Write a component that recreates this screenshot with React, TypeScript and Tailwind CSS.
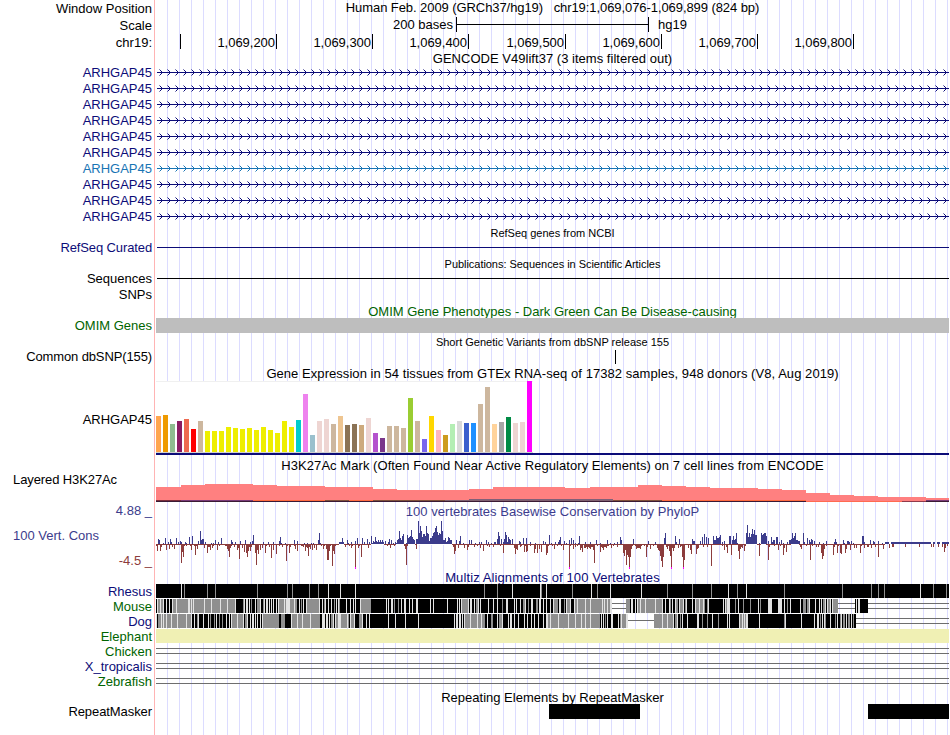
import React from "react";
import clsx from "clsx";

const NAVY = "#0c0c78";

const GTEX: [string, number][] = [
  ["#ffa54f", 36], ["#ee9a00", 37], ["#8fbc8f", 28], ["#8b1c62", 31], ["#ee6a50", 33], ["#ff0000", 23],
  ["#cdb79e", 31], ["#eeee00", 21], ["#eeee00", 21], ["#eeee00", 21], ["#eeee00", 25], ["#eeee00", 24],
  ["#eeee00", 23], ["#eeee00", 24], ["#eeee00", 22], ["#eeee00", 25], ["#eeee00", 22], ["#eeee00", 19],
  ["#eeee00", 31], ["#eeee00", 25], ["#00cdcd", 32], ["#ee82ee", 58], ["#9ac0cd", 17], ["#eed5d2", 31],
  ["#eed5d2", 33], ["#cdb79e", 28], ["#eec591", 36], ["#8b7355", 27], ["#8b7355", 28], ["#cdaa7d", 27],
  ["#eed5d2", 34], ["#b452cd", 19], ["#7a378b", 14], ["#cdb79e", 26], ["#cdb79e", 26], ["#cdb79e", 24],
  ["#9acd32", 54], ["#cdb79e", 31], ["#7a67ee", 13], ["#ffd700", 36], ["#ffb6c1", 22], ["#cd9b1d", 17],
  ["#b4eeb4", 28], ["#d9d9d9", 31], ["#3a5fcd", 29], ["#1e90ff", 29], ["#cdb79e", 48], ["#cdb79e", 65],
  ["#ffd39b", 28], ["#a6a6a6", 30], ["#008b45", 35], ["#eed5d2", 29], ["#eed5d2", 30], ["#ff00ff", 71],
];

// x:height pairs, x is counted from the left edge of the whole browser image
const PHYLO_UP =
  "158:5 159:4 163:1 165:6 168:2 170:5 171:2 176:6 178:2 180:3 181:2 185:2 186:1 189:7 192:8 198:3 200:13 201:4 202:5 203:5 205:2 211:1 213:1 215:4 218:2 221:6 231:4 232:2 235:2 240:3 245:4 250:2 252:3 253:9 263:2 268:2 273:2 279:3 280:7 281:1 285:1 294:4 297:3 304:1 307:1 311:1 313:1 318:4 319:11 320:1 339:2 340:2 341:2 342:6 343:2 347:4 348:1 351:2 355:3 357:6 362:6 364:2 367:5 369:2 371:8 373:3 374:2 375:7 376:3 377:2 378:4 379:2 380:4 381:2 382:4 383:2 385:3 388:2 389:5 391:4 393:1 395:2 397:4 398:5 399:13 400:6 401:4 402:8 403:10 406:1 407:9 408:6 409:7 410:8 411:14 412:7 413:5 414:4 416:5 417:5 418:23 419:11 420:18 421:13 422:7 423:10 424:10 425:8 426:18 427:11 428:10 429:3 430:6 431:6 432:8 433:11 434:12 435:16 436:18 437:12 438:9 439:11 440:10 441:23 442:13 443:4 444:4 445:6 446:2 447:3 448:7 449:6 450:4 451:4 456:4 459:3 460:8 463:1 469:4 471:4 475:1 479:2 481:2 486:4 488:2 491:1 494:2 495:2 497:5 498:12 499:8 501:5 503:2 504:5 505:12 506:9 507:2 508:7 509:5 510:4 512:5 519:3 520:2 523:6 526:6 530:2 535:1 543:3 545:2 549:9 551:1 555:2 558:2 559:4 560:7 564:3 566:1 569:4 571:6 573:4 575:1 578:1 579:8 585:2 590:2 596:4 600:1 607:4 610:1 614:1 617:2 620:7 621:4 633:5 648:3 655:2 664:6 665:11 675:8 676:2 679:5 692:5 693:3 694:3 700:3 702:7 704:10 706:7 708:6 713:8 714:4 715:4 716:8 717:6 718:6 719:7 720:9 722:2 724:3 729:8 730:8 732:4 733:8 734:4 735:5 736:11 737:1 746:11 747:19 748:7 749:11 750:7 751:10 752:15 753:10 754:14 755:9 756:9 759:1 761:11 762:9 763:10 764:11 765:11 766:8 768:3 771:7 772:2 773:4 774:4 776:7 777:7 779:2 781:4 783:1 787:2 789:4 790:4 791:5 792:11 793:6 794:8 795:11 796:4 797:4 798:3 799:3 803:11 804:2 807:6 809:4 810:2 811:5 812:4 814:3 819:2 823:1 826:3 834:2 835:5 836:2 843:4 844:1 847:3 848:3 849:2 851:3 853:1 862:8 863:8 864:2 870:4 873:3 874:2 878:3 882:1";

const PHYLO_DOWN =
  "156:2 157:7 160:7 161:3 162:1 164:1 166:6 169:5 171:1 172:3 174:5 175:1 178:1 181:19 182:8 183:13 184:2 186:2 188:1 190:2 191:6 194:2 195:11 196:2 197:5 204:4 207:9 208:3 209:3 210:6 212:4 213:2 217:6 219:2 223:1 225:2 226:2 227:5 228:7 229:13 230:4 231:2 233:1 234:3 237:6 238:4 239:15 240:1 242:4 244:8 246:9 247:13 248:7 249:3 250:7 251:3 255:9 256:21 257:6 258:10 260:6 262:4 265:9 266:2 269:3 271:14 273:6 276:10 279:2 282:3 284:1 286:17 287:2 289:9 290:3 294:2 295:5 297:7 301:2 302:2 303:3 305:7 306:3 307:4 308:12 309:3 310:5 312:6 314:4 316:6 317:1 321:2 323:5 324:2 326:5 327:16 328:16 329:7 330:2 332:22 333:7 334:10 335:2 345:3 349:2 351:4 352:2 355:25 358:4 359:2 361:13 368:4 384:1 387:2 390:4 394:2 404:2 405:5 406:21 407:2 416:5 453:3 454:10 455:7 458:4 462:1 464:4 465:1 467:6 468:3 470:1 474:3 477:2 480:4 483:7 485:1 487:2 489:3 493:3 495:1 500:2 503:9 504:1 514:4 515:10 516:5 517:6 520:3 521:2 524:8 525:2 526:8 527:7 530:2 534:9 535:5 537:9 539:5 541:8 546:11 547:9 548:2 552:2 554:5 557:2 561:2 563:6 567:1 569:25 570:2 573:5 575:3 577:2 580:6 581:4 582:8 584:4 585:4 586:3 587:5 588:3 589:4 590:5 591:3 592:3 593:6 594:19 597:2 600:8 601:3 602:4 603:6 604:3 605:3 606:4 607:2 608:2 611:4 613:2 617:3 623:9 624:12 625:6 626:21 627:11 628:13 629:25 630:13 631:5 632:2 635:2 636:5 637:4 638:4 639:4 640:5 641:2 644:2 646:13 647:3 650:5 653:2 657:4 658:6 659:7 660:12 661:17 662:23 663:13 666:3 667:5 668:2 669:7 670:12 671:25 672:4 673:7 674:4 678:4 680:3 681:2 682:13 683:25 684:16 688:4 690:6 691:10 696:10 697:5 698:4 701:1 703:3 707:3 711:22 712:1 722:2 724:6 726:3 727:9 731:11 738:7 739:15 740:5 741:3 742:4 744:7 745:2 759:12 768:16 769:3 774:2 778:6 780:2 783:11 784:4 786:8 800:3 801:5 806:2 810:16 812:2 816:3 818:3 821:9 822:15 823:12 824:5 826:2 833:11 834:3 837:9 838:2 840:9 841:10 845:9 846:5 850:6 854:4 856:4 860:9 861:2 864:4 867:3 868:3 871:4 875:3 878:13 883:5 889:4 892:3 893:3 905:3 919:3 931:3 933:3 938:3 942:3 944:8 945:4 947:2";

// [start, end] stretches where the score stays above zero
const POSITIVE_RUNS = [[339, 344], [371, 384], [396, 404], [407, 415], [417, 452], [746, 757], [761, 766], [791, 799]];
const FLAT_RUNS = [[885, 889], [891, 931], [933, 935], [937, 940], [942, 949]];
const CLIPPED = [355, 569, 629, 671, 683];

// position + shade: b = match, g = partial, w = mismatch, n = no alignment, s = single line gap
const MOUSE =
  "156b 157w 158g 160w 161g 163w 164b 166w 167b 169w 170b 172w 173g 176w 177g 188w 190g 191w 192g 193w 194g 204w 205g 211w 212g 220w 221g 227w 228g 235w 236b 243g 244w 245b 246w 248b 249w 250b 251g 252b 255w 256b 257g 260w 261b 263g 264w 265b 266w 268b 269w 270b 271w 272b 273w 274b 276w 277b 278w 279g 284w 285g 286w 290g 294w 295g 297b 299w 300b 301g 302b 303w 304b 306w 307g 319w 320b 322w 323b 324g 325w 326b 328w 329b 331w 332b 334g 335b 336w 337b 338w 339g 340b 346w 347b 350w 351b 353w 354b 355w 356b 360w 361g 363g 371b 386w 387b 388w 389b 391w 393b 394g 395b 398g 399b 401w 402b 404w 406b 409w 410b 412w 413b 416w 417w 418b 430w 431b 433w 434b 447w 448b 457w 458b 459w 460b 461w 462g 468w 469b 470w 472b 474w 475b 476g 478w 479b 480w 481b 488w 489b 493w 494b 497w 498b 502g 503b 506w 508b 514w 515b 516w 517b 520w 521b 523g 525w 526b 528g 529b 531w 533b 536g 538b 539w 541b 543w 544b 546w 547b 550w 551b 553w 554g 558b 559w 561b 564g 565b 566w 567g 570w 571b 574w 575g 577w 578g 585w 586g 590w 591g 602w 603g 604w 605g 607w 608g 610w 612n 626g 630b 631w 633b 635w 636b 637w 638g 640w 641g 645w 646g 655w 656g 662w 663b 665w 666b 669w 670g 671b 672w 673b 675w 676g 678b 679w 680g 683w 684b 685g 686w 687b 692w 693b 695w 696g 699w 700g 703w 704g 705b 707g 708w 709b 723w 724b 725w 726g 727w 730b 735g 736b 738w 739b 743g 744b 750g 751b 758w 759b 760g 761b 768w 772b 778w 782b 784w 785b 787g 788b 790w 791b 800w 801b 803g 806b 807g 809w 810b 815w 816b 819w 820b 821w 822b 823g 825w 826b 827w 828g 830w 831b 832w 833g 838n 855b 856w 857b 858w 860b 868n";

const DOG =
  "156w 157b 158g 161w 162g 163w 164g 166w 167g 171w 172g 177w 178g 186w 187g 191w 192b 194w 195b 197g 198w 199b 203w 204b 208w 209b 210g 211b 214g 215b 216w 217b 219g 220b 222g 223b 226w 227b 229w 230b 231w 232g 237w 238g 243w 244b 245g 247w 248b 250w 251b 252w 254b 255w 256b 257w 258b 260w 261b 262w 263g 279b 281g 285b 291w 292g 297w 298g 302w 303g 310w 311g 320b 322w 325b 326w 328b 329w 330b 331g 333w 334b 335w 336g 338w 341g 347w 348g 349b 350w 351g 354w 355b 359g 362w 363b 366w 367b 369w 370b 388w 389b 395w 396b 405w 406b 418w 419b 454w 455b 456w 458b 459w 461b 462w 463b 464w 465g 470w 471g 477w 478g 481w 482g 485b 487w 488b 491g 493b 497w 498b 499g 502w 503b 508w 509b 510w 512b 514w 515b 518w 519b 524w 525b 527w 528b 531w 532b 534w 535b 538w 539b 543w 544b 546w 548g 550w 551g 558w 559g 568w 569g 575w 576g 581w 582g 585w 586g 590w 591g 600b 601w 602b 603w 604b 605g 606b 607w 608b 611w 613b 618w 619b 620g 621w 622g 626w 628s 654g 662w 663g 667w 668g 673w 674b 675g 677w 678b 680g 681b 682w 683b 687w 688b 697w 699b 702g 703b 707g 708b 712w 713b 718g 719b 727w 728b 729w 730b 739w 740g 742w 743g 744w 745g 746w 748b 759w 760b 784g 785w 786b 801w 802b 814w 815b 817w 819b 820g 821b 822w 823b 824w 825g 826b 830w 831b 835g 836b 837w 838b 840g 841w 842b 843g 845b 846w 847b 848g 850b 851w 852b 853g 854b 856n";

const RHESUS =
  "156b 181w 182b 184g 185b 207g 208b 215g 216b 257g 258b 287g 288b 292g 293b 309g 310b 318g 319b 328w 329b 340w 341b 355w 356b 484g 485b 497g 498b 512w 513b 540w 541g 542b 546w 547b 572g 573b 591w 592b 597g 598b 610w 611b 641w 642b 667g 668b 692g 693b 711g 712b 728w 729b 737g 738b 746w 747b 784g 785b 842g 843b 871g 872b 878g 879b 884g 885b 920w 921b 933g 934b 946g 947b";

const H3K: [number, number][] = [
  [156, 487], [181, 485], [205, 484], [253, 485], [277, 486], [325, 487], [373, 489], [397, 490], [469, 489],
  [493, 487], [565, 488], [590, 487], [638, 485], [662, 486], [686, 487], [710, 488], [758, 489], [782, 490],
  [806, 493], [830, 495], [854, 496], [878, 497], [926, 498],
];

const H3K_STRIP: [number, string][] = [
  [156, "#7b2c3a"], [181, "#7a3a78"], [253, "#ff6a40"], [325, "#80503a"], [349, "#ff6a40"], [373, "#80503a"],
  [445, "#806070"], [613, "#80503a"], [662, "#ff6a40"], [806, "#ff8080"], [926, "#7a3a78"],
];

const parsePairs = (data: string) => data.split(" ").map((p) => p.split(":").map(Number));

const Label = ({ children, className }: { children: React.ReactNode; className?: string }) => (
  <div className={clsx("h-4 shrink-0 whitespace-nowrap", className)}>{children}</div>
);

const Title = ({ children, className }: { children: React.ReactNode; className?: string }) => (
  <div className={clsx("shrink-0 text-center whitespace-pre", className)}>{children}</div>
);

const GeneRow = ({ color }: { color: string }) => (
  <svg width="793" height="16" className="block shrink-0" shapeRendering="crispEdges">
    <rect x="1" y="8" width="792" height="1" fill={color} />
    {Array.from({ length: 99 }, (_, i) => (
      <g key={i} fill={color} transform={`translate(${3 + i * 8} 0)`}>
        <rect x="0" y="5" width="1" height="1" opacity="0.5" />
        <rect x="1" y="6" width="1" height="1" />
        <rect x="2" y="7" width="1" height="1" />
        <rect x="3" y="8" width="1" height="1" />
        <rect x="2" y="9" width="1" height="1" />
        <rect x="1" y="10" width="1" height="1" />
        <rect x="0" y="11" width="1" height="1" opacity="0.5" />
      </g>
    ))}
  </svg>
);

const H3KTrack = () => (
  <svg width="793" height="29" viewBox="156 473 793 29" className="block shrink-0" shapeRendering="crispEdges">
    {H3K.map(([x, y], i) => (
      <rect key={x} x={x} y={y} width={(H3K[i + 1]?.[0] ?? 949) - x} height={501 - y} fill="#ff8080" />
    ))}
    {H3K_STRIP.map(([x, fill], i) => (
      <rect key={x} x={x} y="500" width={(H3K_STRIP[i + 1]?.[0] ?? 949) - x} height="1" fill={fill} />
    ))}
    <rect x="469" y="499" width="144" height="1" fill="#806078" />
    <rect x="156" y="501" width="793" height="1" fill="#3a1a34" />
    <rect x="806" y="501" width="96" height="1" fill="#ff6a50" />
    <rect x="902" y="501" width="24" height="1" fill="#903a4a" />
  </svg>
);

const PhyloTrack = () => (
  <svg width="793" height="52" viewBox="156 518 793 52" className="block shrink-0" shapeRendering="crispEdges">
    <rect x="156" y="544" width="729" height="1" fill="#8c3c3c" />
    {POSITIVE_RUNS.map(([a, b]) => (
      <g key={a}>
        <rect x={a} y="544" width={b - a} height="1" fill="#fff" />
        <rect x={a} y="543" width={b - a} height="1" fill="#3c3c8c" />
      </g>
    ))}
    {FLAT_RUNS.map(([a, b]) => (
      <rect key={a} x={a} y="542" width={b - a} height="2" fill="#3c3c8c" />
    ))}
    {parsePairs(PHYLO_UP).map(([x, h]) => (
      <rect key={x} x={x} y={544 - h} width="1" height={h} fill="#3c3c8c" />
    ))}
    {parsePairs(PHYLO_DOWN).map(([x, h]) => (
      <rect key={x} x={x} y="544" width="1" height={Math.min(h, 24)} fill="#8c3c3c" />
    ))}
    {CLIPPED.map((x) => (
      <rect key={x} x={x} y="567" width="1" height="2" fill="#ff00ff" />
    ))}
  </svg>
);

const SHADES: Record<string, string> = { b: "#000", g: "#8f8f8f", w: "#e2e2e2" };

const Alignment = ({ data }: { data: string }) => {
  const runs = data.split(" ").map((r) => ({ x: Number(r.slice(0, 3)), kind: r[3] }));
  return (
    <svg width="793" height="15" viewBox="156 0 793 15" className="block shrink-0" shapeRendering="crispEdges">
      {runs.map(({ x, kind }, i) => {
        const width = (runs[i + 1]?.x ?? 949) - x;
        if (kind === "s") return <rect key={x} x={x} y="6" width={width} height="1" fill="#6e6e6e" />;
        if (kind === "n")
          return (
            <g key={x} fill="#6e6e6e">
              <rect x={x} y="4" width={width} height="1" />
              <rect x={x} y="9" width={width} height="1" />
            </g>
          );
        return <rect key={x} x={x} y="0" width={width} height="14" fill={SHADES[kind]} />;
      })}
    </svg>
  );
};

const RULER = [
  { text: "1,069,200", width: "w-[96px]" },
  { text: "1,069,300", width: "w-[96px]" },
  { text: "1,069,400", width: "w-[96px]" },
  { text: "1,069,500", width: "w-[97px]" },
  { text: "1,069,600", width: "w-[96px]" },
  { text: "1,069,700", width: "w-[96px]" },
  { text: "1,069,800", width: "w-[96px]" },
];

const SPECIES = [
  { name: "Rhesus", color: "text-[#0c0c78]" },
  { name: "Mouse", color: "text-[#006400]" },
  { name: "Dog", color: "text-[#0c0c78]" },
  { name: "Elephant", color: "text-[#006400]" },
  { name: "Chicken", color: "text-[#006400]" },
  { name: "X_tropicalis", color: "text-[#0c0c78]" },
  { name: "Zebrafish", color: "text-[#006400]" },
];

const Labels = () => (
  <div className="flex w-[155px] shrink-0 flex-col border-r border-[#ffb4b4] pt-px pr-[2px] text-right">
    <Label>Window Position</Label>
    <Label className="mt-px">Scale</Label>
    <Label className="mt-px mb-[14px]">chr19:</Label>
    {Array.from({ length: 10 }, (_, i) => (
      <Label key={i} className={i === 6 ? "text-[#1874b4]" : "text-[#0c0c78]"}>
        ARHGAP45
      </Label>
    ))}
    <Label className="mt-[15px] tracking-[-0.12px] text-[#0c0c78]">RefSeq Curated</Label>
    <Label className="mt-[15px]">Sequences</Label>
    <Label>SNPs</Label>
    <Label className="mt-[15px] text-[#006400]">OMIM Genes</Label>
    <Label className="mt-[15px] tracking-[-0.12px]">Common dbSNP(155)</Label>
    <Label className="mt-[47px]">ARHGAP45</Label>
    <Label className="mt-[44px] pl-[13px] text-left tracking-[-0.1px]">Layered H3K27Ac</Label>
    <Label className="mt-[15px] text-[#3c3c8c]">4.88 _</Label>
    <Label className="mt-[9px] pl-[13px] text-left text-[#3c3c8c]">100 Vert. Cons</Label>
    <Label className="mt-[9px] mb-[15px] text-[#8c3c3c]">-4.5 _</Label>
    {SPECIES.map(({ name, color }) => (
      <div key={name} className={clsx("h-[15px] shrink-0", color)}>
        {name}
      </div>
    ))}
    <Label className="mt-[15px] tracking-[-0.08px]">RepeatMasker</Label>
  </div>
);

const Tracks = () => (
  <div className="ml-px flex w-[793px] shrink-0 flex-col bg-[repeating-linear-gradient(90deg,transparent_0px,transparent_11px,#dcdcff_11px,#dcdcff_12px)]">
    <Title className="h-[17px] tracking-[-0.075px]">
      {"Human Feb. 2009 (GRCh37/hg19)   chr19:1,069,076-1,069,899 (824 bp)"}
    </Title>

    <div className="flex h-[17px] shrink-0">
      <div className="w-[297px] text-right">200 bases</div>
      <div className="ml-[3px] h-[15px] w-[193px] border-x border-black pt-[7px]">
        <div className="h-px bg-black" />
      </div>
      <div className="ml-[9px]">hg19</div>
    </div>

    <div className="flex h-[15px] shrink-0">
      <div className="w-[25px] border-r border-black" />
      {RULER.map(({ text, width }) => (
        <div key={text} className={clsx("border-r border-black pt-px pr-px text-right tracking-[-0.03px]", width)}>
          {text}
        </div>
      ))}
    </div>

    <Title className="h-[15px] pt-[2px] tracking-[0.025px]">GENCODE V49lift37 (3 items filtered out)</Title>
    {Array.from({ length: 10 }, (_, i) => (
      <GeneRow key={i} color={i === 6 ? "#1874b4" : NAVY} />
    ))}

    <Title className="h-4 pt-px text-[11px]">RefSeq genes from NCBI</Title>
    <div className="h-[15px] shrink-0 pt-[7px] pl-px">
      <div className="h-px bg-[#0c0c78]" />
    </div>

    <Title className="h-4 pt-px text-[11px] tracking-[-0.04px]">Publications: Sequences in Scientific Articles</Title>
    <div className="h-[31px] shrink-0 pt-[7px] pl-px">
      <div className="h-px bg-black" />
    </div>

    <Title className="h-4 overflow-hidden pt-[2px] text-[#006400]">
      OMIM Gene Phenotypes - Dark Green Can Be Disease-causing
    </Title>
    <div className="h-[15px] shrink-0 bg-[#bebebe]" />

    <Title className="h-4 pt-px text-[11px]">Short Genetic Variants from dbSNP release 155</Title>
    <div className="h-4 shrink-0 pt-px pl-[459px]">
      <div className="h-[14px] w-px bg-black" />
    </div>

    <Title className="h-4 pt-px tracking-[0.055px]">
      Gene Expression in 54 tissues from GTEx RNA-seq of 17382 samples, 948 donors (V8, Aug 2019)
    </Title>
    <div className="flex h-[72px] w-[377px] shrink-0 items-end gap-[2px] border-t border-b border-t-[#f0f0f0] border-b-[#d0d0d0] bg-white">
      {GTEX.map(([backgroundColor, height], i) => (
        <div key={i} className="w-[5px] shrink-0" style={{ backgroundColor, height }} />
      ))}
    </div>
    <div className="h-[2px] shrink-0 bg-[#0c0c78]" />

    <Title className="h-[18px] pt-[3px] tracking-[0.055px]">
      H3K27Ac Mark (Often Found Near Active Regulatory Elements) on 7 cell lines from ENCODE
    </Title>
    <H3KTrack />

    <Title className="h-4 pt-[2px] tracking-[0.03px] text-[#3c3c8c]">
      100 vertebrates Basewise Conservation by PhyloP
    </Title>
    <PhyloTrack />

    <Title className="h-[14px] overflow-hidden tracking-[0.1px] text-[#0c0c78]">
      Multiz Alignments of 100 Vertebrates
    </Title>
    <Alignment data={RHESUS} />
    <Alignment data={MOUSE} />
    <Alignment data={DOG} />
    <div className="mb-px h-[14px] shrink-0 bg-[#f0f0b4]" />
    <Alignment data="156n" />
    <Alignment data="156n" />
    <Alignment data="156n" />

    <Title className="h-[15px] pt-px">Repeating Elements by RepeatMasker</Title>
    <div className="flex h-[15px] shrink-0 justify-between pl-[393px]">
      <div className="w-[91px] bg-black" />
      <div className="w-[81px] bg-black" />
    </div>
  </div>
);

const App = () => {
  return (
    <div className="flex h-[735px] w-[950px] overflow-hidden bg-white font-['Liberation_Sans',Arial,sans-serif] text-[13px] leading-4 text-black">
      <Labels />
      <Tracks />
    </div>
  );
};

export default App;
